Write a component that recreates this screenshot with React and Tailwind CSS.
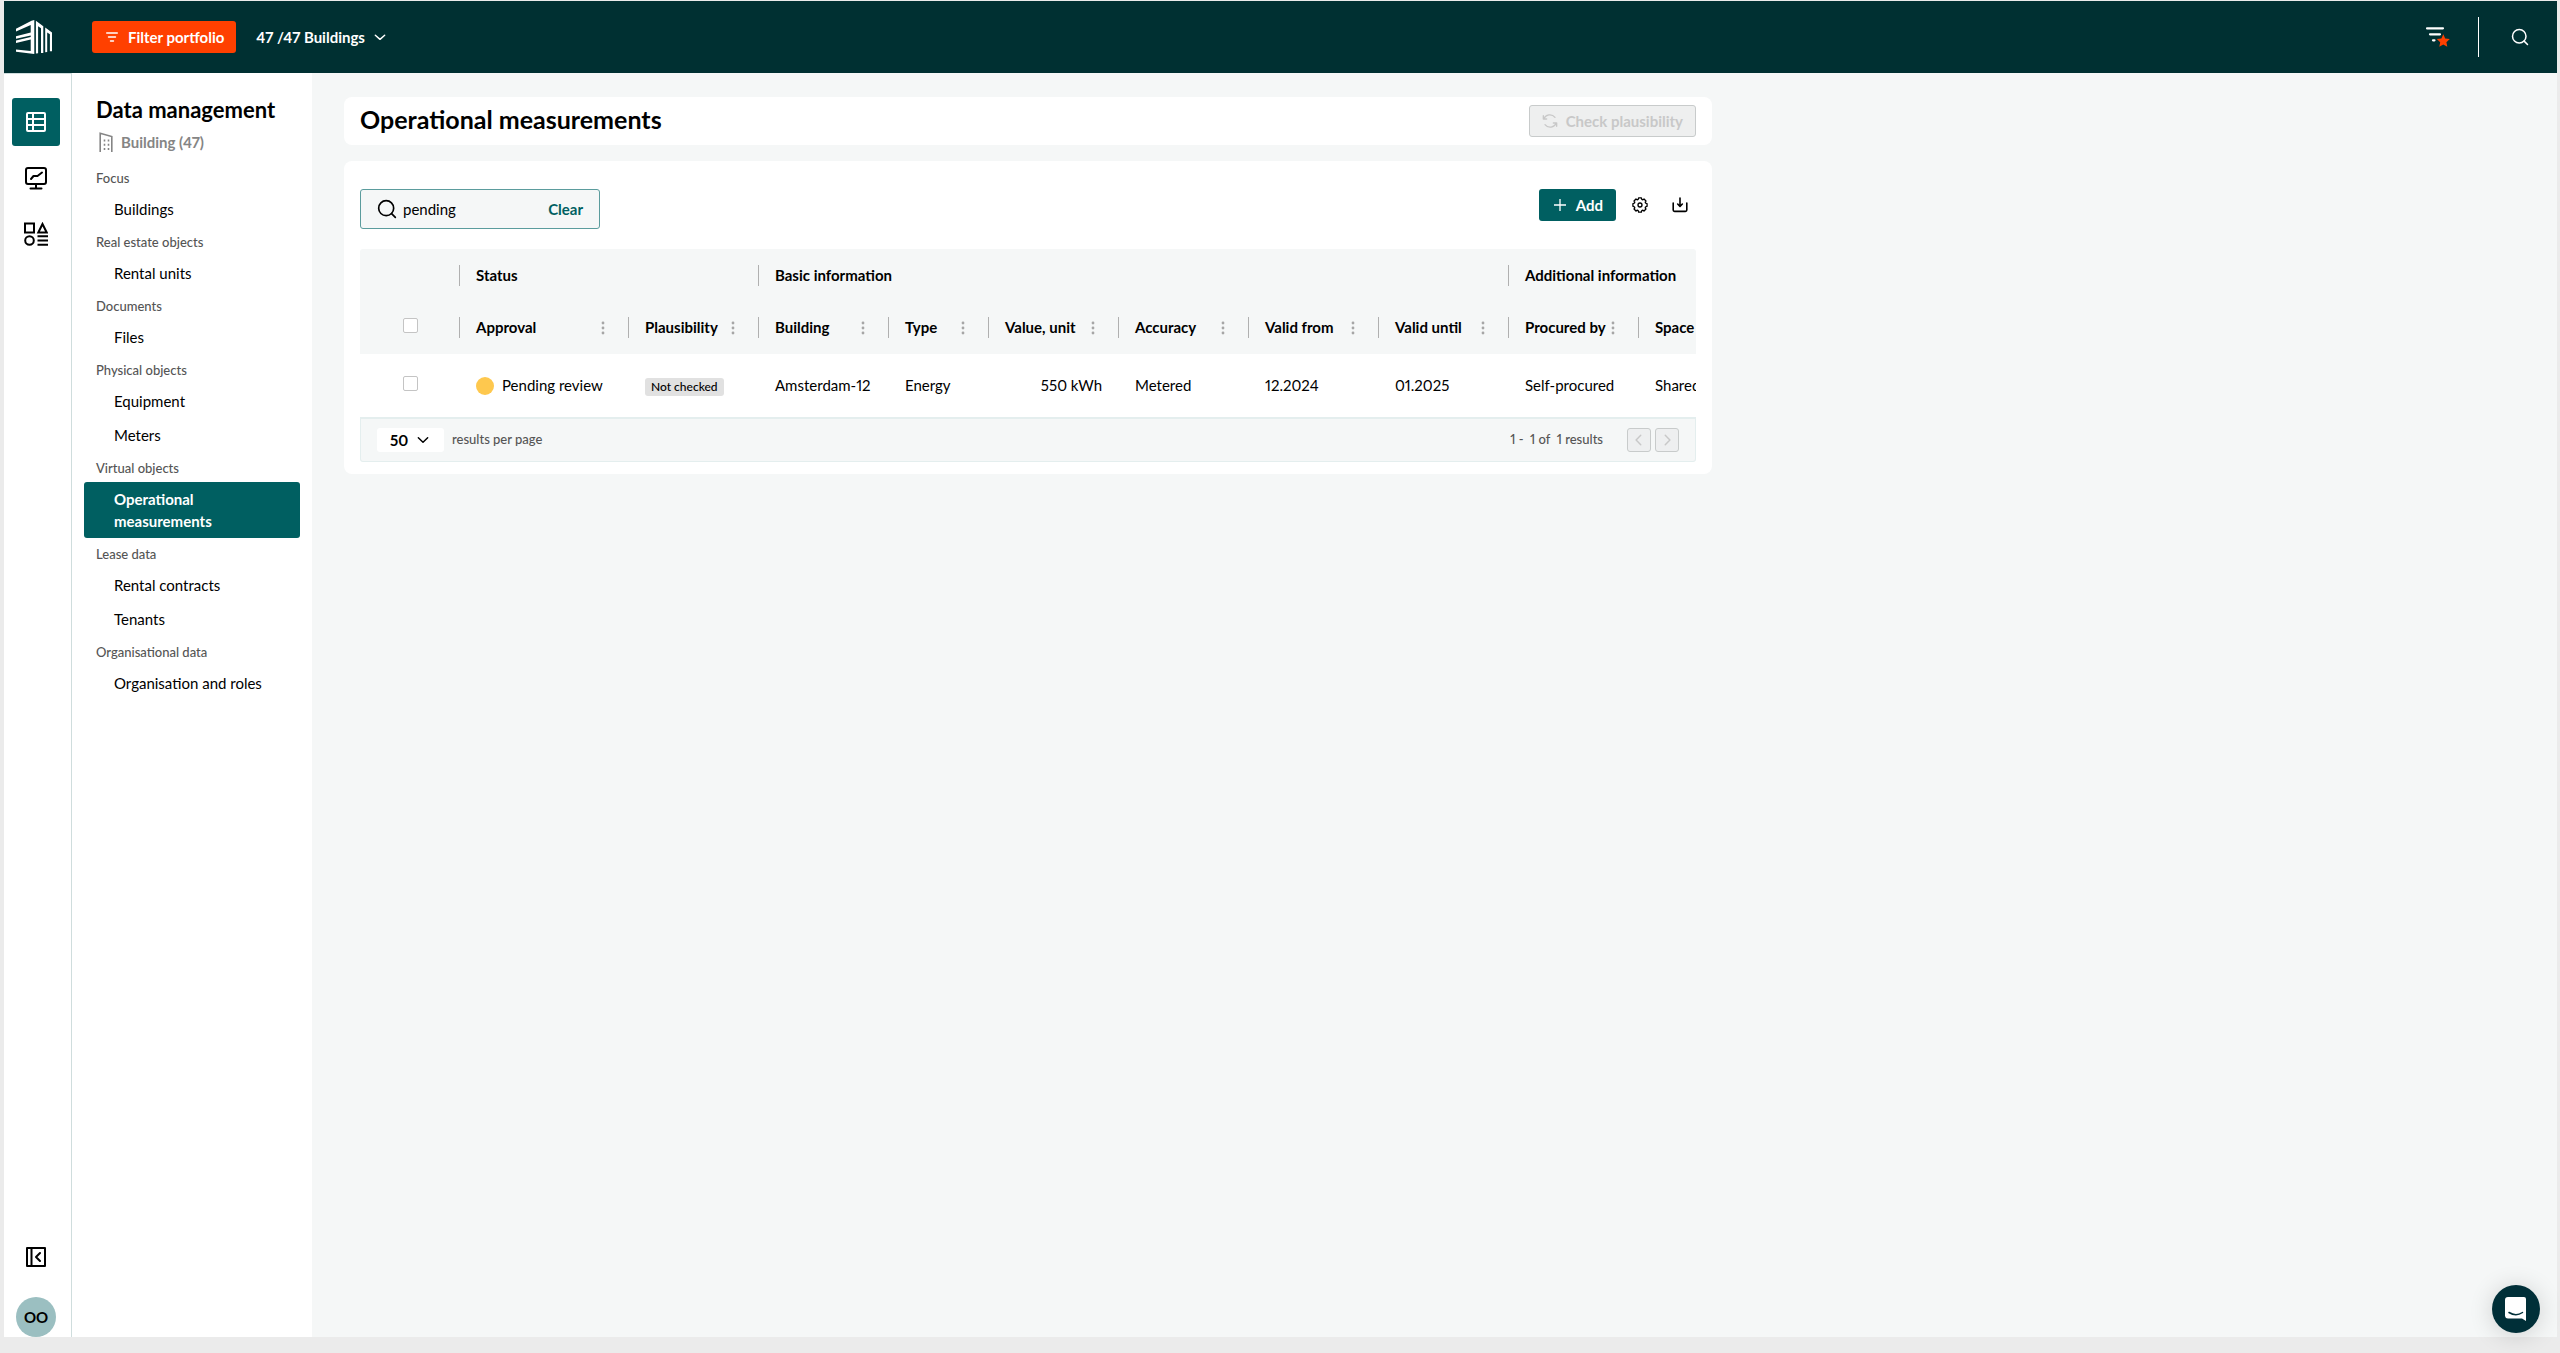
const NAV = [
  { label: "Focus", items: ["Buildings"] },
  { label: "Real estate objects", items: ["Rental units"] },
  { label: "Documents", items: ["Files"] },
  { label: "Physical objects", items: ["Equipment", "Meters"] },
  { label: "Virtual objects", items: ["Operational measurements"] },
  { label: "Lease data", items: ["Rental contracts", "Tenants"] },
  { label: "Organisational data", items: ["Organisation and roles"] },
];
const ACTIVE = "Operational measurements";

const COLUMNS = ["Approval", "Plausibility", "Building", "Type", "Value, unit", "Accuracy", "Valid from", "Valid until", "Procured by", "Space"];

const line = {
  viewBox: "0 0 24 24",
  fill: "none",
  stroke: "currentColor",
  strokeWidth: 2,
  strokeLinecap: "round",
  strokeLinejoin: "round",
  "aria-hidden": true,
};

// Outline of an eight-lobed cog, centred on (12, 12).
const COG = Array.from({ length: 8 }, (_, k) => {
  const at = (deg, r) => {
    const a = (deg * Math.PI) / 180;
    return `${(12 + r * Math.cos(a)).toFixed(2)} ${(12 + r * Math.sin(a)).toFixed(2)}`;
  };
  const base = k * 45;
  return `${k ? "L" : "M"}${at(base - 11, 10.8)}L${at(base + 11, 10.8)}Q${at(base + 22.5, 6.6)} ${at(base + 34, 10.8)}`;
}).join("") + "Z";

function Logo() {
  return (
    <svg viewBox="0 0 36 34" className="h-[34px] w-9" fill="#fff" aria-hidden="true">
      <path d="M0 8.800 15.500 0.800 18.300 0V34L0 31.800V29.400L14.700 31V19.400L0 23V20.600L14.700 17V15.400L0 18.800V16.200L14.700 12.400V5L0 11.600Z" />
      <path d="M19.900 0.800 27.300 6.200V32.900H25V8.200L22.100 6.200V33.300L19.900 33.600Z" />
      <path d="M29.200 7.600 36 12.600V31.300H33.900V14.200L31.200 12.400V32L29.200 32.300Z" />
    </svg>
  );
}

function SearchIcon({ className }) {
  return (
    <svg {...line} className={className}>
      <circle cx="11" cy="11" r="9" />
      <path d="m17.500 17.500 4.500 4.500" />
    </svg>
  );
}

function Chevron({ d, className }) {
  return (
    <svg {...line} strokeWidth="2.500" className={className}>
      <path d={d} />
    </svg>
  );
}

function Header() {
  return (
    <header className="flex h-[72px] items-center bg-[#003032] pr-7 pl-3 text-white">
      <a href="#home" aria-label="Home">
        <Logo />
      </a>
      <button className="ml-10 flex h-8 items-center gap-[10px] rounded-[3px] bg-[#ff4000] pr-3 pl-[14px] text-[15px] font-bold">
        <svg viewBox="0 0 12 10" className="h-[10px] w-3" stroke="#fff" strokeWidth="1.4" strokeLinecap="round" aria-hidden="true">
          <path d="M0.7 1H11.3M2.5 5H9.5M4.5 9H7.5" />
        </svg>
        Filter portfolio
      </button>
      <button className="ml-5 flex items-center gap-2 text-[15px] font-bold">
        47 /47 Buildings
        <Chevron d="m4 9 8 7 8-7" className="h-[14px] w-[14px]" />
      </button>
      <div className="ml-auto flex items-center">
        <button aria-label="Saved filters">
          <svg viewBox="0 0 24 20" className="h-5 w-6" fill="none" aria-hidden="true">
            <path d="M1 1.300h16M4 7.300h10M7 13.300h1.500" stroke="#fff" strokeWidth="2.200" strokeLinecap="round" />
            <path d="m17.300 7.200 1.900 4.300 4.600.5-3.400 3.200.9 4.600-4-2.300-4 2.300.9-4.600-3.400-3.200 4.600-.5z" fill="#ff4000" />
          </svg>
        </button>
        <span className="ml-7 h-10 w-px bg-white" />
        <button className="ml-8" aria-label="Search">
          <SearchIcon className="h-[18px] w-[18px]" />
        </button>
      </div>
    </header>
  );
}

function Rail() {
  return (
    <nav aria-label="Main" className="flex w-17 shrink-0 flex-col items-center border-t border-r border-[#cfdddd] bg-white pt-6 pr-[3px]">
      <button aria-label="Data management" className="flex h-12 w-12 items-center justify-center rounded-[3px] bg-[#005f61] text-white">
        <svg {...line} className="h-6 w-6">
          <rect x="3" y="3" width="18" height="18" rx="1" />
          <path d="M9 3v18M3 9h18M3 15h18" />
        </svg>
      </button>
      <button aria-label="Dashboards" className="mt-2 flex h-12 w-12 items-center justify-center">
        <svg {...line} className="h-6 w-6">
          <rect x="2" y="2" width="20" height="16" rx="2" />
          <path d="M12 18v4M6.500 22.500h11M7 13l2.500-3 4 0 4.500-3.500" />
        </svg>
      </button>
      <button aria-label="Catalogue" className="mt-2 flex h-12 w-12 items-center justify-center">
        <svg {...line} strokeLinejoin="miter" strokeLinecap="butt" className="h-6 w-6">
          <rect x="1" y="1.500" width="9" height="9" />
          <path d="M18.500 2 14.300 10.500h8.400z" />
          <circle cx="5.500" cy="18.500" r="4.300" />
          <path d="M13.500 14.200h10.500M13.500 18.500h10.500M13.500 22.800h10.500" />
        </svg>
      </button>
      <button aria-label="Collapse menu" className="mt-auto flex h-12 w-12 items-center justify-center">
        <svg {...line} className="h-6 w-6">
          <rect x="3" y="3" width="18" height="18" />
          <path d="M7.500 3v18M16 8l-4 4 4 4" />
        </svg>
      </button>
      <button className="mt-4 h-10 w-10 rounded-full bg-[#9bbfc1] text-[15px] font-bold text-black">OO</button>
    </nav>
  );
}

function SideNav() {
  return (
    <aside className="w-60 shrink-0 bg-white px-3 pt-[21px]">
      <h2 className="pl-3 text-[22px] leading-8 font-bold">Data management</h2>
      <p className="flex h-8 items-center gap-2 pl-[15px] text-[15px] font-bold text-[#858585]">
        <svg viewBox="0 0 14 20" className="h-5 w-[14px]" fill="none" stroke="currentColor" aria-hidden="true">
          <path d="M1.200 20V1.200L12.800 4.500V20" strokeWidth="1.600" />
          <path d="M5.500 7.500v11.500M9.500 7.500v11.500" strokeWidth="1.600" strokeDasharray="2 2.200" />
        </svg>
        Building (47)
      </p>
      <nav aria-label="Data management" className="pt-1">
        {NAV.map((group) => (
          <section key={group.label}>
            <h3 className="flex h-[30px] items-center pt-1 pl-3 text-[13px] font-medium text-[#555]">{group.label}</h3>
            {group.items.map((item) => (
              <a
                key={item}
                href="#nav"
                className={
                  item === ACTIVE
                    ? "block rounded-[3px] bg-[#005f61] py-[6px] pr-20 pl-[30px] text-[15px] leading-[22px] font-bold text-white"
                    : "block py-[6px] pl-[30px] text-[15px] leading-[22px]"
                }
              >
                {item}
              </a>
            ))}
          </section>
        ))}
      </nav>
    </aside>
  );
}

function GroupHead({ span, children }) {
  return (
    <th scope="colgroup" colSpan={span} className="h-13 p-0 text-left align-middle font-bold">
      <div className="flex h-[21px] items-center border-l border-[#b0b0b0] pl-4 whitespace-nowrap">{children}</div>
    </th>
  );
}

function ColumnHead({ name }) {
  return (
    <th scope="col" className="h-[53px] p-0 text-left align-middle font-bold">
      <div className="flex h-[21px] items-center justify-between border-l border-[#b0b0b0] pr-[17px] pl-4 whitespace-nowrap">
        {name}
        <button aria-label={`${name} menu`} className="flex w-4 justify-center text-[#a6a6a6]">
          <svg viewBox="0 0 4 14" className="h-[14px] w-1" fill="currentColor" aria-hidden="true">
            <circle cx="2" cy="2" r="1.400" />
            <circle cx="2" cy="7" r="1.400" />
            <circle cx="2" cy="12" r="1.400" />
          </svg>
        </button>
      </div>
    </th>
  );
}

function Check({ label }) {
  return <input type="checkbox" aria-label={label} className="mb-[5px] ml-[43px] block h-[15px] w-[15px] appearance-none rounded-[2px] border border-[#c4c4c4] bg-white" />;
}

function Measurements() {
  return (
    <div className="mt-5 overflow-hidden rounded-t-[3px]">
      <table className="w-[1447px] table-fixed border-collapse text-[15px]">
        <colgroup>
          <col className="w-[99px]" />
          <col className="w-[169px]" />
          <col className="w-[130px]" />
          <col className="w-[130px]" />
          <col className="w-[100px]" />
          <col className="w-[130px]" />
          <col className="w-[130px]" />
          <col className="w-[130px]" />
          <col className="w-[130px]" />
          <col className="w-[130px]" />
          <col />
        </colgroup>
        <thead className="bg-[#f5f7f7]">
          <tr>
            <td />
            <GroupHead span={2}>Status</GroupHead>
            <GroupHead span={6}>Basic information</GroupHead>
            <GroupHead span={2}>Additional information</GroupHead>
          </tr>
          <tr>
            <th className="p-0"><Check label="Select all" /></th>
            {COLUMNS.map((name) => <ColumnHead key={name} name={name} />)}
          </tr>
        </thead>
        <tbody>
          <tr className="h-[63px] whitespace-nowrap [&>td]:p-0 [&>td+td]:pl-[17px]">
            <td><Check label="Select row" /></td>
            <td>
              <span className="flex items-center gap-2">
                <span className="h-[18px] w-[18px] rounded-full bg-[#fec84e]" />
                Pending review
              </span>
            </td>
            <td>
              <span className="inline-block rounded-[3px] bg-[#e1e1e1] px-[6px] text-[12px] leading-[18px] font-medium">Not checked</span>
            </td>
            <td>Amsterdam-12</td>
            <td>Energy</td>
            <td className="text-right"><span className="mr-4">550 kWh</span></td>
            <td>Metered</td>
            <td>12.2024</td>
            <td>01.2025</td>
            <td>Self-procured</td>
            <td>Shared</td>
          </tr>
        </tbody>
      </table>
    </div>
  );
}

function Pager() {
  return (
    <div className="flex h-[45px] items-center rounded-b-[3px] border border-t-2 border-[#e4eeee] bg-[#f5f7f7] px-4 text-[13px] font-medium text-[#555]">
      <div className="relative">
        <select id="page-size" className="h-6 w-[67px] appearance-none rounded-[3px] bg-white pl-[13px] text-[15px] font-bold text-black">
          <option>50</option>
        </select>
        <Chevron d="m4 8 8 8 8-8" className="pointer-events-none absolute top-[5px] right-[14px] h-[14px] w-[14px] text-black" />
      </div>
      <label htmlFor="page-size" className="ml-2">results per page</label>
      <span className="ml-auto">1 -&nbsp; 1 of&nbsp; 1 results</span>
      <button disabled aria-label="Previous page" className="ml-6 flex h-6 w-6 items-center justify-center rounded-[3px] border border-[#c8cbcb] bg-[#eeeff0] text-[#c8c8c8]">
        <Chevron d="m15 4-8 8 8 8" className="h-[14px] w-[14px]" />
      </button>
      <button disabled aria-label="Next page" className="ml-1 flex h-6 w-6 items-center justify-center rounded-[3px] border border-[#c8cbcb] bg-[#eeeff0] text-[#c8c8c8]">
        <Chevron d="m9 4 8 8-8 8" className="h-[14px] w-[14px]" />
      </button>
    </div>
  );
}

export default function App() {
  return (
    <div className="flex h-screen flex-col bg-[#ebebeb] pt-px pr-[3px] pb-4 pl-1 font-['Lato',sans-serif] text-black proportional-nums">
      <Header />
      <div className="flex min-h-0 flex-1 bg-[#f5f7f7]">
        <Rail />
        <SideNav />
        <main className="relative min-w-0 flex-1 px-8 pt-6">
          <div className="flex max-w-[1368px] flex-col gap-4">
            <section className="flex h-12 items-center justify-between rounded-lg bg-white px-4">
              <h1 className="pb-1 text-[25px] leading-8 font-bold">Operational measurements</h1>
              <button disabled className="flex h-8 items-center gap-2 rounded-[3px] border border-[#c8cbcb] bg-[#eeefef] px-3 text-[15px] font-bold text-[#c8c8c8]">
                <svg {...line} className="h-4 w-4">
                  <path d="M2 4v5h5M2.500 9a10 10 0 0 1 17-2.500M22 20v-5h-5M21.500 15a10 10 0 0 1-17 2.500" />
                </svg>
                Check plausibility
              </button>
            </section>
            <section className="rounded-lg bg-white px-4 pt-7 pb-3">
              <div className="flex items-start justify-between">
                <div className="flex h-10 w-60 items-center rounded-[3px] border border-[#5b9c9d] bg-[#f5f7f7] pr-4 pl-4">
                  <SearchIcon className="h-5 w-5 shrink-0" />
                  <input aria-label="Search table" defaultValue="pending" className="ml-[6px] min-w-0 flex-1 bg-transparent text-[15px] outline-none" />
                  <button className="text-[15px] font-bold text-[#005f61]">Clear</button>
                </div>
                <div className="flex items-center">
                  <button className="flex h-8 items-center gap-[10px] rounded-[3px] bg-[#005f61] pr-[13px] pl-[15px] text-[15px] font-bold text-white">
                    <svg viewBox="0 0 12 12" className="h-3 w-3" stroke="currentColor" strokeWidth="1.300" aria-hidden="true">
                      <path d="M6 0v12M0 6h12" />
                    </svg>
                    Add
                  </button>
                  <button aria-label="Table settings" className="ml-4 flex h-4 w-4 items-center">
                    <svg {...line} className="h-4 w-4">
                      <path d={COG} />
                      <circle cx="12" cy="12" r="3" />
                    </svg>
                  </button>
                  <button aria-label="Download" className="mx-2 ml-6 flex h-4 w-4 items-center">
                    <svg {...line} strokeWidth="2.400" className="h-4 w-4">
                      <path d="M12 1.500v12M8.500 10.500l3.500 3.500 3.500-3.500M1.800 9v10.500a2 2 0 0 0 2 2h16.400a2 2 0 0 0 2-2V9" />
                    </svg>
                  </button>
                </div>
              </div>
              <Measurements />
              <Pager />
            </section>
          </div>
          <button aria-label="Open chat" className="absolute right-[17px] bottom-1 flex h-12 w-12 items-center justify-center rounded-full bg-[#002f38] shadow-[0_2px_24px_rgba(0,0,0,0.16)]">
            <svg viewBox="0 0 24 26" className="h-[26px] w-6" aria-hidden="true">
              <path d="M4 1h16a2 2 0 0 1 2 2v22l-4-2.500H4a3 3 0 0 1-3-2.500V4a3 3 0 0 1 3-3z" fill="#fff" />
              <path d="M5 16.500q7 4.500 13.500 0" fill="none" stroke="#002f38" strokeWidth="1.500" strokeLinecap="round" />
            </svg>
          </button>
        </main>
      </div>
    </div>
  );
}
